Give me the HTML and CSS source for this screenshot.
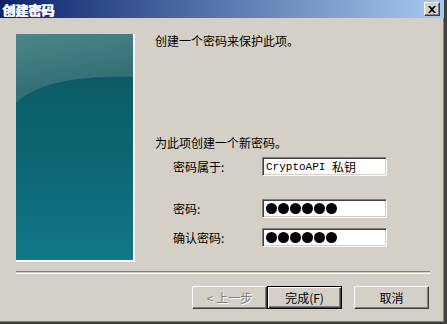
FILE: index.html
```html
<!DOCTYPE html>
<html>
<head>
<meta charset="utf-8">
<link rel="stylesheet" href="styles.css">
</head>
<body>
<div class="window">
  <div class="titlebar">
    <span class="title">创建密码</span>
    <span class="close"><svg width="8" height="7" viewBox="0 0 8 7"><path d="M0 0h2l2 2 2-2h2L5 3.5 8 7H6L4 5 2 7H0l3-3.5z" fill="#000"/></svg></span>
  </div>
  <div class="main">
    <div class="art">
      <svg width="120" height="228" viewBox="0 0 120 228">
        <defs>
          <linearGradient id="g1" x1="0" y1="0" x2="0.3" y2="1">
            <stop offset="0" stop-color="#4d8587"/>
            <stop offset="1" stop-color="#2b6b72"/>
          </linearGradient>
          <linearGradient id="g2" x1="0" y1="0" x2="0" y2="1">
            <stop offset="0" stop-color="#0a5560"/>
            <stop offset="0.5" stop-color="#0c6470"/>
            <stop offset="1" stop-color="#127789"/>
          </linearGradient>
        </defs>
        <rect x="0" y="0" width="117" height="226" fill="url(#g2)"/>
        <path d="M0 0H117V43C70 42 25 46 0 69Z" fill="url(#g1)"/>
        <rect x="117" y="0" width="2" height="228" fill="#fff"/>
        <rect x="0" y="226" width="119" height="2" fill="#fff"/>
      </svg>
    </div>
    <div class="panel">
      <p class="intro">创建一个密码来保护此项。</p>
      <p class="sub">为此项创建一个新密码。</p>
      <div class="form">
        <div class="row r1"><span class="label">密码属于:</span><span class="field"><span class="mono">CryptoAPI </span>私钥</span></div>
        <div class="row r2"><span class="label">密码:</span><span class="field"><span class="dot"></span><span class="dot"></span><span class="dot"></span><span class="dot"></span><span class="dot"></span><span class="dot"></span></span></div>
        <div class="row r3"><span class="label">确认密码:</span><span class="field"><span class="dot"></span><span class="dot"></span><span class="dot"></span><span class="dot"></span><span class="dot"></span><span class="dot"></span></span></div>
      </div>
    </div>
  </div>
  <div class="sep"></div>
  <div class="buttons">
    <span class="btn disabled">&lt; 上一步</span>
    <span class="btn default">完成(F)</span>
    <span class="btn cancel">取消</span>
  </div>
</div>
</body>
</html>
```

FILE: styles.css
```css
html, body {
  margin: 0;
  padding: 0;
  background: #d4d0c8;
}
.window {
  width: 447px;
  height: 324px;
  box-sizing: border-box;
  background: #d4d0c8;
  border-right: 3px solid #404040;
  border-bottom: 2px solid #404040;
  box-shadow: inset -1px -1px 0 #808080;
  font-family: "Noto Sans CJK SC", "Liberation Sans", sans-serif;
  font-size: 12px;
  color: #000;
  display: flex;
  flex-direction: column;
}
.titlebar {
  height: 18px;
  background: linear-gradient(to right, #0a246a, #a6caf0);
  display: flex;
  align-items: center;
  justify-content: space-between;
  padding: 0 4px 0 2px;
}
.title {
  color: #fff;
  font-weight: bold;
  font-size: 13px;
  line-height: 13px;
  text-shadow: 1px 0 0 #fff;
}
.close {
  width: 16px;
  height: 14px;
  box-sizing: border-box;
  background: #d4d0c8;
  border-top: 1px solid #fff;
  border-left: 1px solid #fff;
  border-right: 1px solid #404040;
  border-bottom: 1px solid #404040;
  box-shadow: inset -1px -1px 0 #808080;
  display: flex;
  align-items: center;
  justify-content: center;
}
.main {
  display: flex;
  padding: 16px 0 0 16px;
  height: 253px;
  box-sizing: border-box;
}
.art {
  width: 120px;
  height: 228px;
  line-height: 0;
}
.panel {
  margin-left: 19px;
}
.intro {
  margin: 1px 0 0 0;
  line-height: 12px;
}
.sub {
  margin: 90px 0 0 0;
  line-height: 12px;
}
.form {
  margin: 8px 0 0 18px;
}
.row {
  display: flex;
  align-items: center;
  height: 19px;
}
.r2 { margin-top: 23px; }
.r3 { margin-top: 10px; }
.label {
  width: 89px;
  line-height: 12px;
}
.field {
  width: 125px;
  height: 19px;
  box-sizing: border-box;
  background: #fff;
  border-top: 1px solid #808080;
  border-left: 1px solid #808080;
  border-right: 1px solid #fff;
  border-bottom: 1px solid #fff;
  box-shadow: inset 1px 1px 0 #404040, inset -1px -1px 0 #d4d0c8;
  display: flex;
  align-items: center;
  padding-left: 3px;
  line-height: 12px;
}
.mono {
  font-family: "Liberation Mono", monospace;
  font-size: 11px;
  white-space: pre;
}
.dot {
  width: 11px;
  height: 11px;
  border-radius: 50%;
  background: #000;
  margin-right: 1px;
}
.sep {
  margin-left: 16px;
  width: 414px;
  height: 1px;
  border-top: 1px solid #808080;
  border-bottom: 1px solid #fff;
}
.buttons {
  display: flex;
  margin: 12px 0 0 192px;
}
.btn {
  width: 75px;
  height: 23px;
  box-sizing: border-box;
  border-top: 1px solid #fff;
  border-left: 1px solid #fff;
  border-right: 1px solid #404040;
  border-bottom: 1px solid #404040;
  box-shadow: inset -1px -1px 0 #808080;
  display: flex;
  align-items: center;
  justify-content: center;
  line-height: 12px;
}
.disabled {
  color: #808080;
  text-shadow: 1px 1px 0 #fff;
}
.default {
  border: 1px solid #000;
  box-shadow: inset 1px 1px 0 #fff, inset -1px -1px 0 #404040, inset -2px -2px 0 #808080;
}
.cancel {
  margin-left: 12px;
}
```
